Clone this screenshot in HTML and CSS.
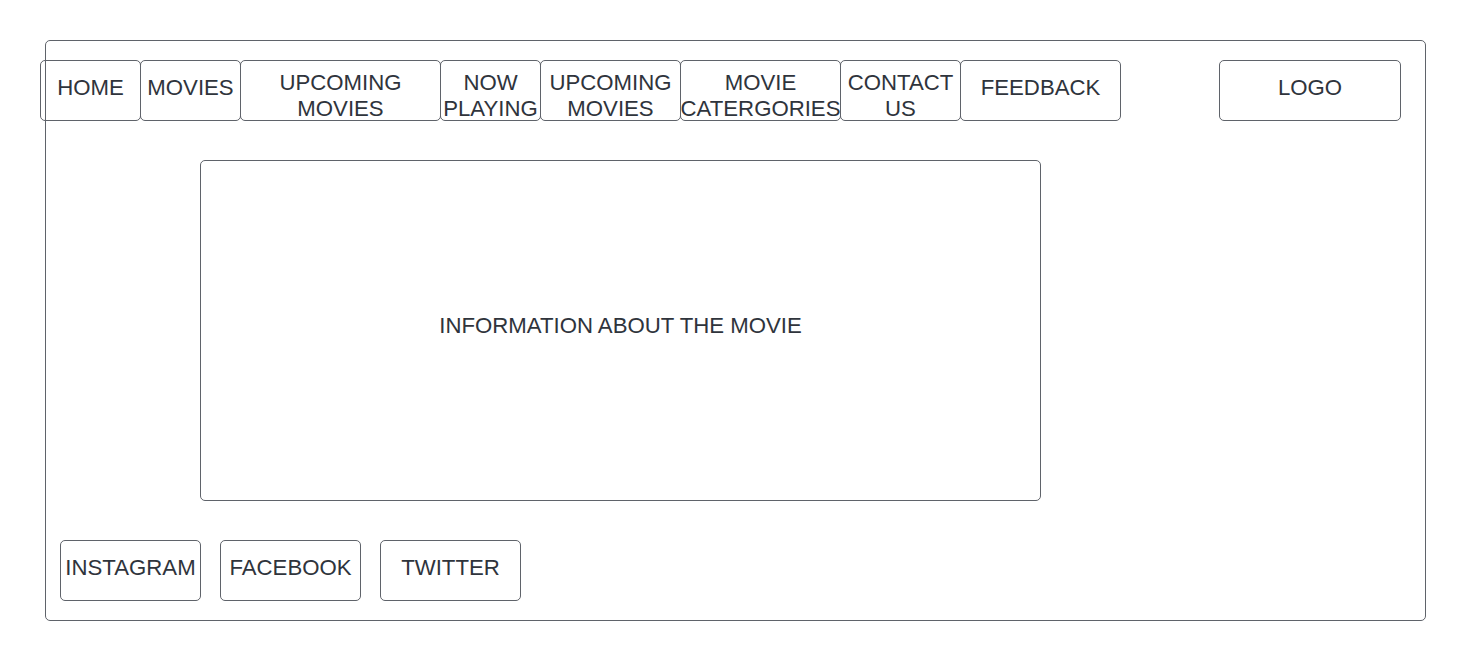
FILE: index.html
```html
<!DOCTYPE html>
<html>
<head>
<meta charset="utf-8">
<link rel="stylesheet" href="styles.css">
</head>
<body>
<div class="frame">
  <nav class="nav">
    <div class="btn one w100">HOME</div>
    <div class="btn one w100">MOVIES</div>
    <div class="btn two w200">UPCOMING<br>MOVIES</div>
    <div class="btn two w100">NOW<br>PLAYING</div>
    <div class="btn two w140">UPCOMING<br>MOVIES</div>
    <div class="btn two w160">MOVIE<br>CATERGORIES</div>
    <div class="btn two w120">CONTACT<br>US</div>
    <div class="btn one w160">FEEDBACK</div>
    <div class="btn one logo">LOGO</div>
  </nav>
  <main class="info">INFORMATION ABOUT THE MOVIE</main>
  <footer class="social">
    <div class="btn one w140 f">INSTAGRAM</div>
    <div class="btn one w140 f">FACEBOOK</div>
    <div class="btn one w140 f">TWITTER</div>
  </footer>
</div>
</body>
</html>
```
FILE: styles.css
```css
* { box-sizing: border-box; }
html, body { margin: 0; padding: 0; background: #ffffff; }
body {
  font-family: "Liberation Sans", Arial, sans-serif;
  font-size: 22.2px;
  color: #2f343c;
}
.frame {
  margin: 40px 0 0 45px;
  width: 1381px;
  height: 581px;
  border: 1px solid #5f636a;
  border-radius: 5px;
  display: flex;
  flex-direction: column;
}
.nav {
  display: flex;
  margin: 19px 0 0 -6px;
}
.btn {
  height: 61px;
  border: 1px solid #5f636a;
  border-radius: 5px;
  display: flex;
  flex-direction: column;
  align-items: center;
  text-align: center;
  line-height: 26px;
  white-space: nowrap;
  flex: none;
}
.btn.one { justify-content: center; padding-bottom: 6px; }
.btn.two { justify-content: flex-start; padding-top: 9px; }
.w100 { width: 101px; }
.w120 { width: 121px; }
.w140 { width: 141px; }
.w160 { width: 161px; }
.w200 { width: 201px; }
.nav .btn + .btn { margin-left: -1px; }
.nav .btn.logo { width: 182px; margin-left: auto; margin-right: 24px; }
.info {
  margin: 39px 0 0 154px;
  width: 841px;
  height: 341px;
  border: 1px solid #5f636a;
  border-radius: 5px;
  display: flex;
  align-items: center;
  justify-content: center;
  padding-bottom: 9px;
}
.social {
  display: flex;
  gap: 19px;
  margin: 39px 0 0 14px;
}
.btn.f { padding-bottom: 6px; }
```
